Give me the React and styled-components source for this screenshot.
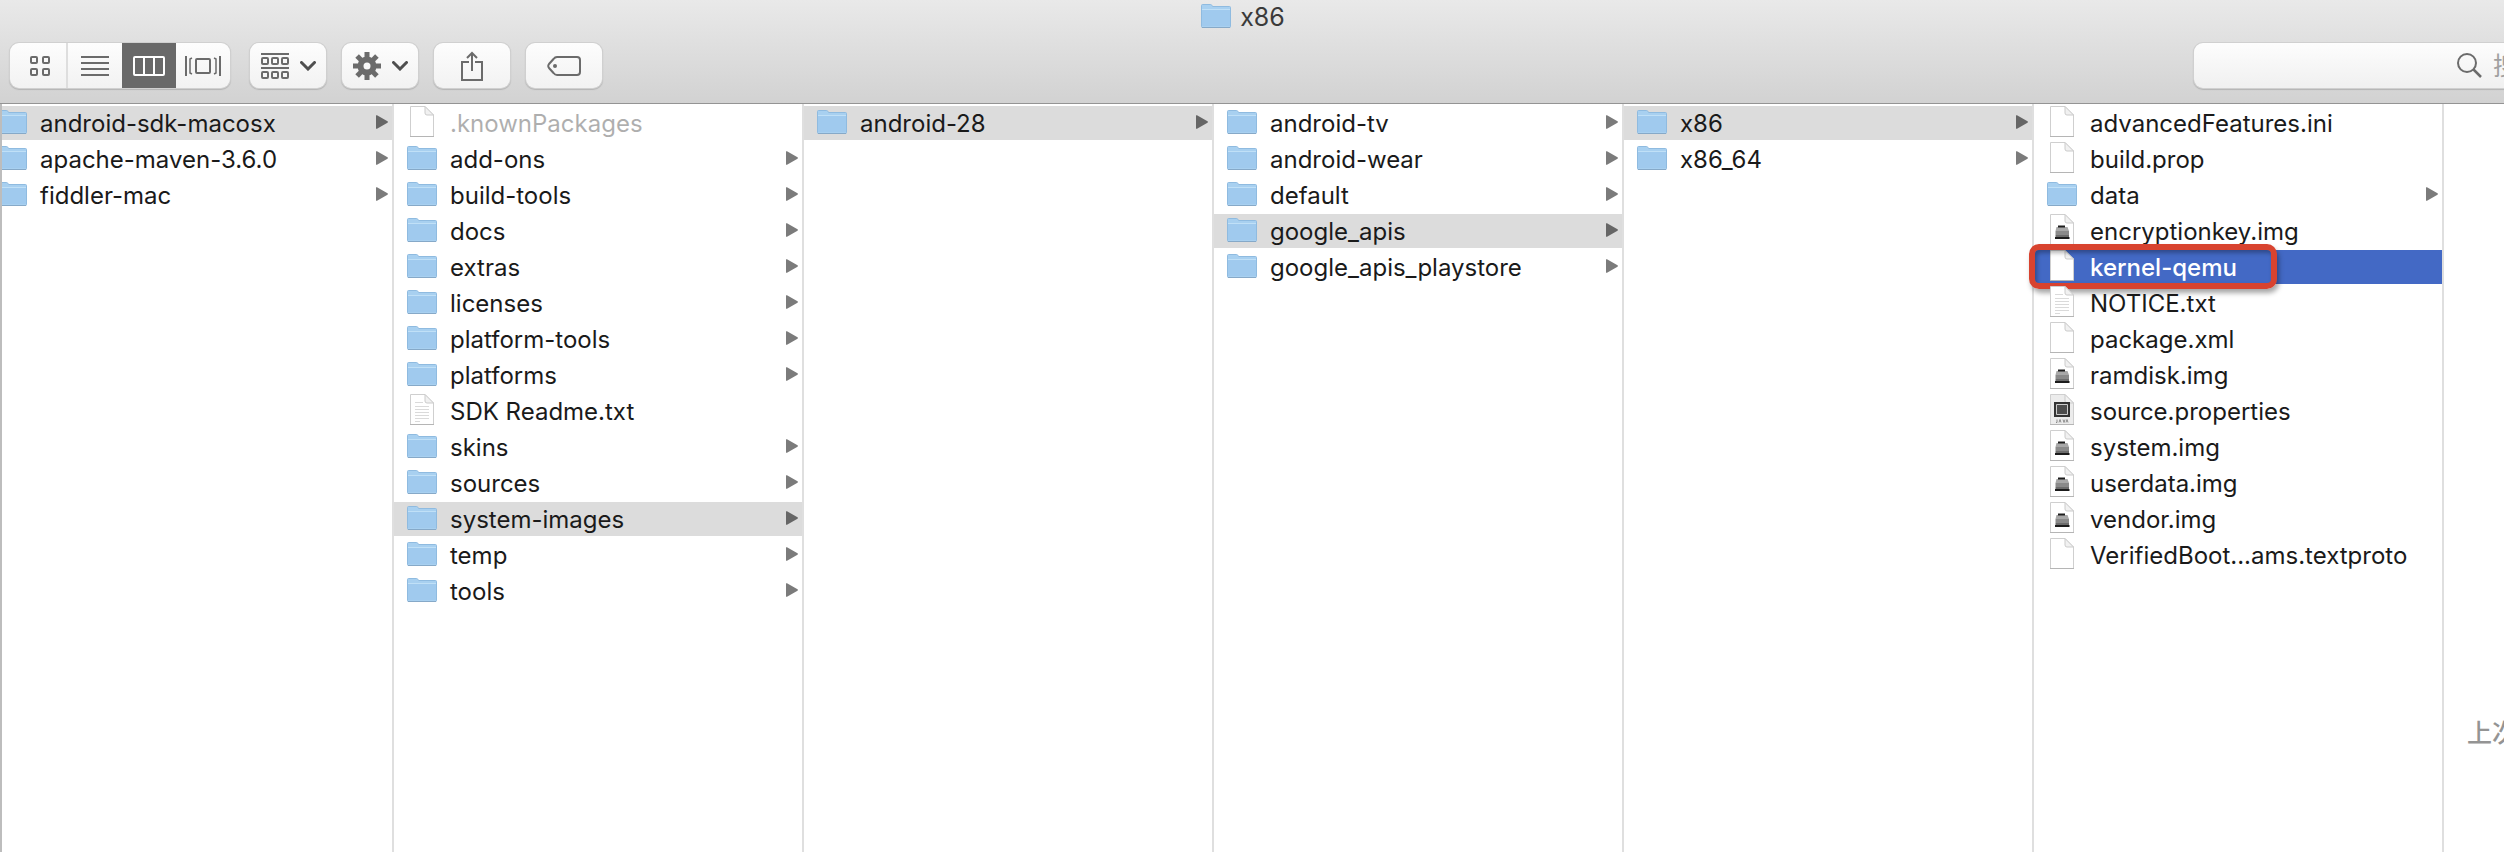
import React from 'react';
import styled, { createGlobalStyle } from 'styled-components';

const GlobalStyle = createGlobalStyle`
  * {
    box-sizing: border-box;
  }
  body {
    margin: 0;
    background: #fff;
    font-family: Inter, "Noto Sans CJK SC", sans-serif;
  }
  button, input {
    font: inherit;
    color: inherit;
  }
  svg {
    display: block;
    flex: none;
  }
`;

const Window = styled.div`
  display: flex;
  flex-direction: column;
  min-height: 100vh;
  overflow: hidden;
`;

const Header = styled.header`
  background: linear-gradient(#e9e9e9, #d2d2d2);
  border-bottom: 1px solid #949494;
`;

const TitleBar = styled.h1`
  display: flex;
  align-items: center;
  justify-content: center;
  gap: 9px;
  height: 34px;
  margin: 0;
  padding-right: 18px;
  font-size: 25px;
  font-weight: 400;
  color: #3a3a3a;
`;

const Toolbar = styled.div`
  display: flex;
  align-items: flex-start;
  gap: 16px;
  height: 69px;
  padding: 9px 0 0 10px;
`;

const Segments = styled.div`
  display: flex;
  width: 220px;
  height: 45px;
  margin-right: 4px;
  border-radius: 9px;
  background: linear-gradient(#fdfdfd, #f2f2f2);
  box-shadow: 0 0 0 1px #d0d0d0, 0 1px 1px 1px #b4b4b4;
`;

const Segment = styled.button`
  display: flex;
  flex: 1;
  align-items: center;
  justify-content: center;
  padding: 0;
  border: 0;
  border-right: ${props => (props.$divider ? '2px solid #dedede' : '0')};
  background: ${props => (props.$active ? '#696969' : 'transparent')};
  color: ${props => (props.$active ? '#fff' : '#6b6b6b')};

  &:first-child {
    flex: none;
    width: 58px;
    padding-left: 4px;
  }
`;

const ToolButton = styled.button`
  display: flex;
  align-items: center;
  justify-content: center;
  gap: 11px;
  width: 76px;
  height: 45px;
  padding: 0;
  border: 0;
  border-radius: 9px;
  background: linear-gradient(#fdfdfd, #f2f2f2);
  box-shadow: 0 0 0 1px #d0d0d0, 0 1px 1px 1px #b4b4b4;
  color: #6b6b6b;
`;

const Search = styled.label`
  display: flex;
  align-items: center;
  gap: 11px;
  width: 310px;
  height: 45px;
  margin-left: auto;
  padding-left: 263px;
  border-radius: 9px 0 0 9px;
  background: linear-gradient(#fdfdfd, #f0f0f0);
  box-shadow: 0 0 0 1px #d0d0d0, 0 1px 1px 1px #b4b4b4;
  color: #6b6b6b;
`;

const SearchInput = styled.input`
  flex: 1;
  width: 0;
  min-width: 0;
  padding: 0;
  border: 0;
  outline: 0;
  background: none;
  font-size: 25px;

  &::placeholder {
    color: #a0a0a0;
    opacity: 1;
  }
`;

const Browser = styled.main`
  display: flex;
  flex: 1;
  border-left: 2px solid #bdbdbd;
  overflow: hidden;
`;

const Column = styled.ul`
  flex: none;
  width: 410px;
  margin: 0;
  padding: 2px 0 0;
  border-right: 2px solid #dfdfdf;
  list-style: none;

  /* the browser is scrolled a little to the right */
  &:first-child {
    margin-left: -18px;
  }
`;

const Item = styled.li`
  position: relative;
  margin-bottom: 2px;
`;

const rowColors = {
  path: '#dcdcdc',
  current: '#4369c5'
};

const Row = styled.button`
  display: flex;
  align-items: center;
  width: 100%;
  height: 34px;
  padding: 0 4px 0 13px;
  border: 0;
  background: ${props => rowColors[props.$state] || 'transparent'};
  color: ${props => (props.$state === 'current' ? '#fff' : '#1a1a1a')};
  font-size: 24px;
  font-weight: ${props => (props.$state === 'current' ? 500 : 400)};
  line-height: 32px;
  text-align: left;
`;

const Name = styled.span`
  flex: 1;
  margin-left: 13px;
  padding-top: 2px;
  white-space: nowrap;
  opacity: ${props => (props.$dim ? 0.35 : 1)};
`;

const Marker = styled.div`
  position: absolute;
  top: -6px;
  left: -5px;
  width: 248px;
  height: 45px;
  border: 6px solid #d8432f;
  border-radius: 10px;
  box-shadow: 2px 4px 5px rgba(0, 0, 0, 0.35), inset 2px 3px 4px rgba(0, 0, 0, 0.3);
  pointer-events: none;
`;

const Preview = styled.aside`
  flex: 1;
  min-width: 0;
  padding: 612px 0 0 23px;
  overflow: hidden;
  color: #949494;
  font-size: 25px;
  font-weight: 500;
  line-height: 34px;
  white-space: nowrap;
`;

const FolderIcon = () => (
  <svg width="30" height="34" viewBox="0 0 30 34">
    <path d="M.5 7V5.500q0-1 1-1h8q1 0 1.500 1l.5 1H28.500q1 0 1 1V26.500q0 1-1 1H1.500q-1 0-1-1z" fill="#a8d0f0" stroke="#8fbbe0" />
    <path d="M1 9.500H29V26H1z" fill="#a0caee" />
    <path d="M1 9.500H29" stroke="#c0e0f7" />
    <path d="M1 27.500H29" stroke="#86a9c8" />
  </svg>
);

const PageIcon = ({ kind }) => (
  <svg width="30" height="34" viewBox="0 0 30 34">
    <path d="M3.500.5H18L26.500 9V30.500H3.500z" fill={kind === 'java' ? '#ececec' : '#fff'} stroke="#cfcfcf" />
    <path d="M18 .5V7q0 2 2 2h6.500z" fill="#f1f1f1" stroke="#cbcbcb" />
    <path d="M3 30.500H27" stroke="#b5b5b5" />
    {kind === 'text' && (
      <path d="M8 8.500h8M8 12.500h14M8 15.500h14M8 18.500h14M8 21.500h14M8 24.500h14M8 27.500h5" stroke="#dadada" />
    )}
    {kind === 'disk' && (
      <g>
        <path d="M9.500 13H20.500L22 17H8.500z" fill="#a8a8a8" />
        <path d="M8.500 17H22V21H8.500z" fill="#8a8a8a" />
        <path d="M8.500 21H22V24H8.500z" fill="#6c6c6c" />
        <path d="M11 12.500H18" stroke="#1c1c1c" strokeWidth="2" />
        <path d="M8 24H22.500" stroke="#1c1c1c" strokeWidth="2" />
      </g>
    )}
    {kind === 'java' && (
      <g>
        <path d="M7 8h16v15H7z" fill="#333" />
        <path d="M9.500 10.500h11v10h-11z" fill="#4c4c4c" stroke="#ccc" />
        <path d="M10 25.500v3h-1M12 28.500l1-3 1 3M16 25.500l1 3 1-3M19 28.500l1-3 1 3" fill="none" stroke="#777" strokeWidth=".8" />
      </g>
    )}
  </svg>
);

const Arrow = ({ dark }) => (
  <svg width="12" height="34" viewBox="0 0 12 34">
    <path d="M0 9.500Q0 9 1 9.300L11.500 15.300Q12.300 16 11.500 16.700L1 22.700Q0 23 0 22.500z" fill={dark ? '#666' : '#7b7b7b'} />
  </svg>
);

const Chevron = () => (
  <svg width="16" height="10" viewBox="0 0 16 10" fill="none" stroke="#4f4f4f" strokeWidth="3">
    <path d="M1.500 1.500L8 8L14.500 1.500" strokeLinecap="round" />
  </svg>
);

const GridIcon = () => (
  <svg width="20" height="20" viewBox="0 0 20 20" fill="none" stroke="currentColor" strokeWidth="2">
    <rect x="1" y="1" width="6" height="6" rx="1" />
    <rect x="13" y="1" width="6" height="6" rx="1" />
    <rect x="1" y="13" width="6" height="6" rx="1" />
    <rect x="13" y="13" width="6" height="6" rx="1" />
  </svg>
);

const ListIcon = () => (
  <svg width="28" height="20" viewBox="0 0 28 20" stroke="currentColor" strokeWidth="2">
    <path d="M0 1H28M0 7H28M0 13H28M0 19H28" />
  </svg>
);

const ColumnsIcon = () => (
  <svg width="32" height="20" viewBox="0 0 32 20" fill="none" stroke="currentColor" strokeWidth="2">
    <rect x="1" y="1" width="30" height="18" rx="1" />
    <path d="M11 1V19M21 1V19" />
  </svg>
);

const CoverIcon = () => (
  <svg width="36" height="20" viewBox="0 0 36 20" fill="none" stroke="currentColor" strokeWidth="2">
    <rect x="11" y="3" width="14" height="14" rx="1" />
    <path d="M1 0V20M35 0V20" />
    <path d="M7 2L5 3V17L7 18M29 2L31 3V17L29 18" strokeWidth="1.500" />
  </svg>
);

const ArrangeIcon = () => (
  <svg width="28" height="26" viewBox="0 0 28 26" fill="none" stroke="currentColor" strokeWidth="2">
    <path d="M0 1H28M0 15H28" />
    {[1, 11, 21].map(x => (
      <g key={x}>
        <rect x={x} y="5" width="6" height="6" rx="1" />
        <rect x={x} y="19" width="6" height="6" rx="1" />
      </g>
    ))}
  </svg>
);

const GearIcon = () => (
  <svg width="28" height="28" viewBox="-14 -14 28 28" fill="currentColor">
    {[0, 45, 90, 135].map(angle => (
      <rect key={angle} x="-2.500" y="-14" width="5" height="28" transform={`rotate(${angle})`} />
    ))}
    <circle r="9.500" />
    <circle r="3.500" fill="#f8f8f8" />
  </svg>
);

const ShareIcon = () => (
  <svg width="22" height="30" viewBox="0 0 22 30" fill="none" stroke="currentColor" strokeWidth="2">
    <path d="M8 11H1V29H21V11H14" />
    <path d="M11 20V2M6 7L11 2L16 7" />
  </svg>
);

const TagIcon = () => (
  <svg width="34" height="20" viewBox="0 0 34 20" fill="none" stroke="currentColor" strokeWidth="2">
    <path d="M10 1H30Q33 1 33 4V16Q33 19 30 19H10Q8 19 6.500 17L2 12Q.5 10 2 8L6.500 3Q8 1 10 1z" />
    <circle cx="8" cy="10" r="2" fill="currentColor" stroke="none" />
  </svg>
);

const SearchIcon = () => (
  <svg width="25" height="25" viewBox="0 0 25 25" fill="none" stroke="currentColor" strokeWidth="2">
    <circle cx="10" cy="10" r="9" />
    <path d="M16.500 16.500L24 24" strokeWidth="2.500" />
  </svg>
);

const folder = (name, state) => ({ name, state, kind: 'folder' });
const file = (name, kind, state) => ({ name, kind, state });

const columns = [
  [folder('android-sdk-macosx', 'path'), folder('apache-maven-3.6.0'), folder('fiddler-mac')],
  [
    file('.knownPackages', 'page', 'hidden'),
    folder('add-ons'),
    folder('build-tools'),
    folder('docs'),
    folder('extras'),
    folder('licenses'),
    folder('platform-tools'),
    folder('platforms'),
    file('SDK Readme.txt', 'text'),
    folder('skins'),
    folder('sources'),
    folder('system-images', 'path'),
    folder('temp'),
    folder('tools')
  ],
  [folder('android-28', 'path')],
  [
    folder('android-tv'),
    folder('android-wear'),
    folder('default'),
    folder('google_apis', 'path'),
    folder('google_apis_playstore')
  ],
  [folder('x86', 'path'), folder('x86_64')],
  [
    file('advancedFeatures.ini', 'page'),
    file('build.prop', 'page'),
    folder('data'),
    file('encryptionkey.img', 'disk'),
    file('kernel-qemu', 'page', 'current'),
    file('NOTICE.txt', 'text'),
    file('package.xml', 'page'),
    file('ramdisk.img', 'disk'),
    file('source.properties', 'java'),
    file('system.img', 'disk'),
    file('userdata.img', 'disk'),
    file('vendor.img', 'disk'),
    file('VerifiedBoot...ams.textproto', 'page')
  ]
];

const Entry = ({ name, kind, state }) => (
  <Item>
    <Row type="button" $state={state}>
      {kind === 'folder' ? <FolderIcon /> : <PageIcon kind={kind} />}
      <Name $dim={state === 'hidden'}>{name}</Name>
      {kind === 'folder' && <Arrow dark={state === 'path'} />}
    </Row>
    {state === 'current' && <Marker />}
  </Item>
);

const App = () => (
  <Window>
    <GlobalStyle />
    <Header>
      <TitleBar>
        <FolderIcon />
        <span>x86</span>
      </TitleBar>
      <Toolbar>
        <Segments>
          <Segment type="button" aria-label="Icons" $divider>
            <GridIcon />
          </Segment>
          <Segment type="button" aria-label="List">
            <ListIcon />
          </Segment>
          <Segment type="button" aria-label="Columns" $active>
            <ColumnsIcon />
          </Segment>
          <Segment type="button" aria-label="Cover Flow">
            <CoverIcon />
          </Segment>
        </Segments>
        <ToolButton type="button" aria-label="Arrange">
          <ArrangeIcon />
          <Chevron />
        </ToolButton>
        <ToolButton type="button" aria-label="Action">
          <GearIcon />
          <Chevron />
        </ToolButton>
        <ToolButton type="button" aria-label="Share">
          <ShareIcon />
        </ToolButton>
        <ToolButton type="button" aria-label="Tags">
          <TagIcon />
        </ToolButton>
        <Search>
          <SearchIcon />
          <SearchInput type="text" aria-label="搜索" placeholder="搜索" />
        </Search>
      </Toolbar>
    </Header>
    <Browser>
      {columns.map((entries, i) => (
        <Column key={i}>
          {entries.map(entry => (
            <Entry key={entry.name} {...entry} />
          ))}
        </Column>
      ))}
      <Preview>上次</Preview>
    </Browser>
  </Window>
);

export default App;
